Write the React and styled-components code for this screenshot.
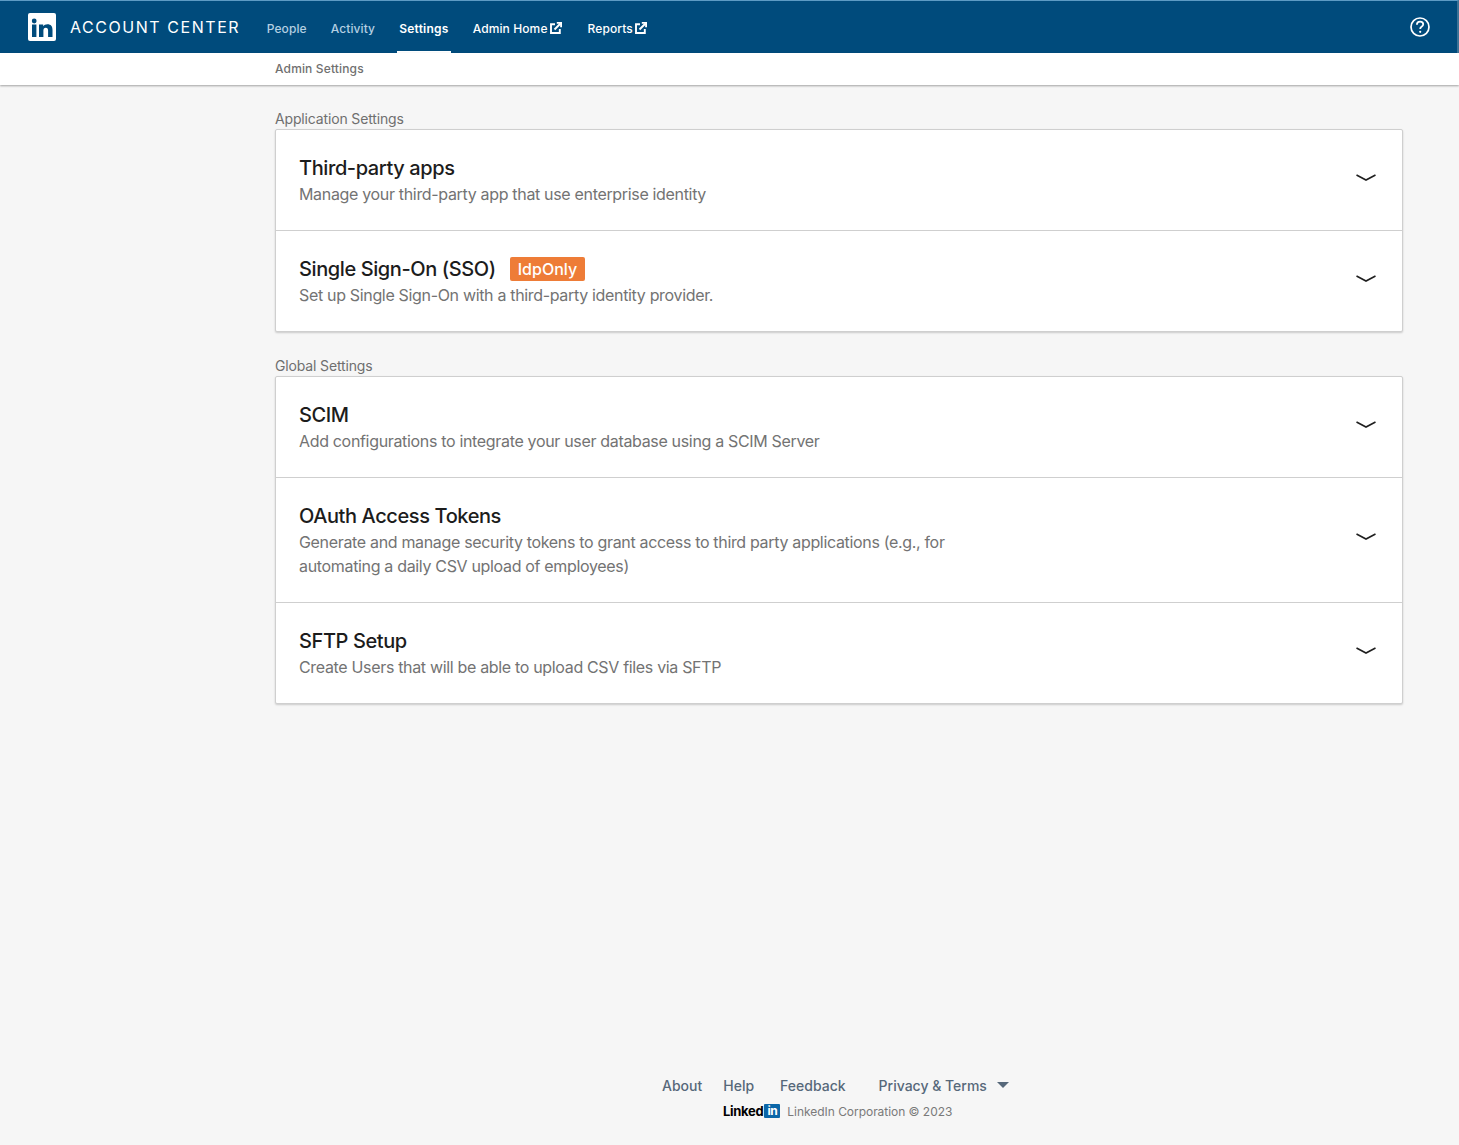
import React from 'react';
import styled, { createGlobalStyle } from 'styled-components';

const GlobalStyle = createGlobalStyle`
  html, body { margin: 0; padding: 0; background: #f6f6f6; }
  body { font-family: Inter, "Noto Sans", "Liberation Sans", sans-serif; -webkit-font-smoothing: antialiased; }
`;

const Page = styled.div`
  min-height: 1145px;
  display: flex;
  flex-direction: column;
  box-sizing: border-box;
`;

const TopBar = styled.header`
  height: 52px;
  background: #004b7c;
  border-top: 1px solid #5d9bc4;
  border-right: 2px solid #3d7396;
  display: flex;
  align-items: stretch;
  padding: 0 27px 0 28px;
`;

const Brand = styled.div`
  display: flex;
  align-items: center;
  gap: 14px;
  margin-right: 14.5px;
`;

const BrandName = styled.span`
  color: #fff;
  font-size: 16px;
  font-weight: 400;
  letter-spacing: 1.55px;
  margin-top: -1px;
  white-space: nowrap;
`;

const Nav = styled.nav`
  display: flex;
  align-items: stretch;
  flex: 1;
`;

const NavItem = styled.a`
  display: flex;
  align-items: center;
  gap: 2px;
  padding: 4px 2px 0;
  margin: 0 ${(p) => p.$gap || 10}px 0 10px;
  font-size: 12px;
  font-weight: ${(p) => (p.$active ? 600 : 500)};
  letter-spacing: ${(p) => (p.$active ? '0.25px' : '0.1px')};
  color: ${(p) => (p.$light ? '#fff' : '#b4cfe2')};
  border-bottom: 2px solid ${(p) => (p.$active ? '#fff' : 'transparent')};
  box-sizing: border-box;
  white-space: nowrap;
`;

const HelpButton = styled.div`
  display: flex;
  align-items: center;
`;

const SubBar = styled.div`
  height: 30px;
  background: #fff;
  box-shadow: 0 1px 2px rgba(0, 0, 0, 0.35);
  padding: 0 0 2px 275px;
  display: flex;
  align-items: center;
  font-size: 12px;
  font-weight: 500;
  letter-spacing: 0.15px;
  color: #707070;
`;

const Main = styled.main`
  width: 1128px;
  margin-left: 275px;
  padding-top: 25px;
  flex: 1;
`;

const Section = styled.section`
  margin-bottom: 25px;
`;

const SectionLabel = styled.div`
  font-size: 14px;
  line-height: 18px;
  letter-spacing: -0.15px;
  margin-bottom: 1px;
  color: #6f6f6f;
`;

const Card = styled.div`
  background: #fff;
  border: 1px solid #cfcfcf;
  border-radius: 2px;
  box-shadow: 0 1px 2px rgba(0, 0, 0, 0.18);
`;

const Row = styled.div`
  display: flex;
  align-items: ${(p) => (p.$tall ? 'flex-start' : 'center')};
  justify-content: space-between;
  padding: 25px 23px 24px 23px;
  border-top: ${(p) => (p.$first ? '0' : '1px solid #cfcfcf')};
  height: ${(p) => p.$height || 51}px;
`;

const RowText = styled.div`
  width: 680px;
`;

const RowTitle = styled.div`
  display: flex;
  align-items: center;
  gap: 14px;
  font-size: 20px;
  line-height: 26px;
  font-weight: 500;
  letter-spacing: -0.4px;
  margin-bottom: 1px;
  color: #1c1c1c;
`;

const Badge = styled.span`
  background: #ee7c37;
  color: #fff;
  font-size: 16px;
  line-height: 24px;
  font-weight: 500;
  padding: 0 8px;
  border-radius: 2px;
  letter-spacing: 0;
`;

const RowDescription = styled.div`
  font-size: 16px;
  line-height: 24px;
  color: #737373;
  width: 660px;
  letter-spacing: -0.33px;
`;

const Chevron = styled.svg`
  flex: none;
  margin-top: ${(p) => (p.$tall ? '30px' : '0')};
  margin-bottom: ${(p) => (p.$tall ? '0' : '6px')};
  margin-right: 3px;
`;

const Footer = styled.footer`
  display: flex;
  flex-direction: column;
  align-items: flex-start;
  padding: 0 0 26px 662px;
  gap: 9px;
`;

const FooterLinks = styled.div`
  display: flex;
  align-items: center;
  font-size: 14px;
  font-weight: 500;
  color: #56687a;
`;

const FooterLink = styled.a`
  margin-right: ${(p) => p.$gap}px;
  margin-top: ${(p) => (p.$low ? '1px' : '0')};
`;

const Caret = styled.span`
  width: 0;
  height: 0;
  border-left: 6px solid transparent;
  border-right: 6px solid transparent;
  border-top: 6px solid #56687a;
  margin-left: 10px;
`;

const Copyright = styled.div`
  display: flex;
  align-items: center;
  margin-left: 61px;
  font-size: 12px;
  letter-spacing: -0.04px;
  color: #7a7a7a;
`;

const Wordmark = styled.span`
  font-size: 13px;
  font-weight: 700;
  letter-spacing: -0.3px;
  color: #000;
`;

const InBox = styled.span`
  width: 16px;
  height: 14px;
  background: #0a66a8;
  border-radius: 1px;
  color: #fff;
  font-size: 12px;
  font-weight: 700;
  line-height: 14px;
  text-align: center;
  margin: 0 7px 0 1px;
  letter-spacing: -0.4px;
`;

const LogoBox = styled.span`
  width: 28px;
  height: 28px;
  background: #fff;
  border-radius: 2px;
  display: block;
  flex: none;
`;

function Logo() {
  return (
    <LogoBox>
      <svg width="28" height="28" viewBox="0 0 28 28">
        <circle cx="6.2" cy="8" r="2.4" fill="#004b7c" />
        <rect x="4" y="11.5" width="4.4" height="12.5" fill="#004b7c" />
        <path
          d="M11 11.5h4.2v1.8c.8-1.3 2.3-2.1 4.2-2.1 3.5 0 5.1 2.1 5.1 5.7V24h-4.4v-6.3c0-1.9-.7-3-2.3-3-1.700 0-2.400 1.200-2.400 3V24H11z"
          fill="#004b7c"
        />
      </svg>
    </LogoBox>
  );
}

function ExternalIcon() {
  return (
    <svg width="12" height="12" viewBox="0 0 12 12" fill="none" stroke="#fff" strokeWidth="1.9">
      <path d="M5 2.200H1v8.800h8.800V7" />
      <path d="M4.500 7.500 10.500 1.500" />
      <path d="M6.800 .9h4.300v4.300" />
    </svg>
  );
}

function HelpIcon() {
  return (
    <svg width="20" height="20" viewBox="0 0 20 20" fill="none">
      <circle cx="10" cy="10" r="9" stroke="#fff" strokeWidth="1.700" />
      <path
        d="M6.900 7.700c0-1.900 1.300-3 3.200-3 1.800 0 3.100 1 3.100 2.600 0 1.300-.8 1.900-1.700 2.500-.8.500-1.300 1-1.300 2.200"
        stroke="#fff"
        strokeWidth="1.800"
      />
      <circle cx="10.200" cy="14.800" r="1.100" fill="#fff" />
    </svg>
  );
}

function ChevronIcon({ tall }) {
  return (
    <Chevron $tall={tall} width="20" height="8" viewBox="0 0 20 8" fill="none">
      <path d="M0.500 1 10 6 19.500 1" stroke="#1f1f1f" strokeWidth="1.600" />
    </Chevron>
  );
}

const applicationRows = [
  { title: 'Third-party apps', text: 'Manage your third-party app that use enterprise identity' },
  { title: 'Single Sign-On (SSO)', badge: 'IdpOnly', text: 'Set up Single Sign-On with a third-party identity provider.' },
];

const globalRows = [
  { title: 'SCIM', text: 'Add configurations to integrate your user database using a SCIM Server' },
  {
    title: 'OAuth Access Tokens',
    text: 'Generate and manage security tokens to grant access to third party applications (e.g., for automating a daily CSV upload of employees)',
    tall: true,
  },
  { title: 'SFTP Setup', text: 'Create Users that will be able to upload CSV files via SFTP' },
];

function SettingsCard({ rows }) {
  return (
    <Card>
      {rows.map((row, i) => (
        <Row key={row.title} $first={i === 0} $tall={row.tall} $height={row.tall ? 75 : 51}>
          <RowText>
            <RowTitle>
              {row.title}
              {row.badge && <Badge>{row.badge}</Badge>}
            </RowTitle>
            <RowDescription>{row.text}</RowDescription>
          </RowText>
          <ChevronIcon tall={row.tall} />
        </Row>
      ))}
    </Card>
  );
}

export default function App() {
  return (
    <>
      <GlobalStyle />
      <Page>
        <TopBar>
          <Brand>
            <Logo />
            <BrandName>ACCOUNT CENTER</BrandName>
          </Brand>
          <Nav>
            <NavItem>People</NavItem>
            <NavItem>Activity</NavItem>
            <NavItem $light $active>Settings</NavItem>
            <NavItem $light $gap={12}>Admin Home<ExternalIcon /></NavItem>
            <NavItem $light>Reports<ExternalIcon /></NavItem>
          </Nav>
          <HelpButton><HelpIcon /></HelpButton>
        </TopBar>
        <SubBar>Admin Settings</SubBar>
        <Main>
          <Section>
            <SectionLabel>Application Settings</SectionLabel>
            <SettingsCard rows={applicationRows} />
          </Section>
          <Section>
            <SectionLabel>Global Settings</SectionLabel>
            <SettingsCard rows={globalRows} />
          </Section>
        </Main>
        <Footer>
          <FooterLinks>
            <FooterLink $gap={21}>About</FooterLink>
            <FooterLink $gap={26}>Help</FooterLink>
            <FooterLink $gap={33}>Feedback</FooterLink>
            <FooterLink $gap={0} $low>Privacy &amp; Terms</FooterLink>
            <Caret />
          </FooterLinks>
          <Copyright>
            <Wordmark>Linked</Wordmark>
            <InBox>in</InBox>
            LinkedIn Corporation © 2023
          </Copyright>
        </Footer>
      </Page>
    </>
  );
}
